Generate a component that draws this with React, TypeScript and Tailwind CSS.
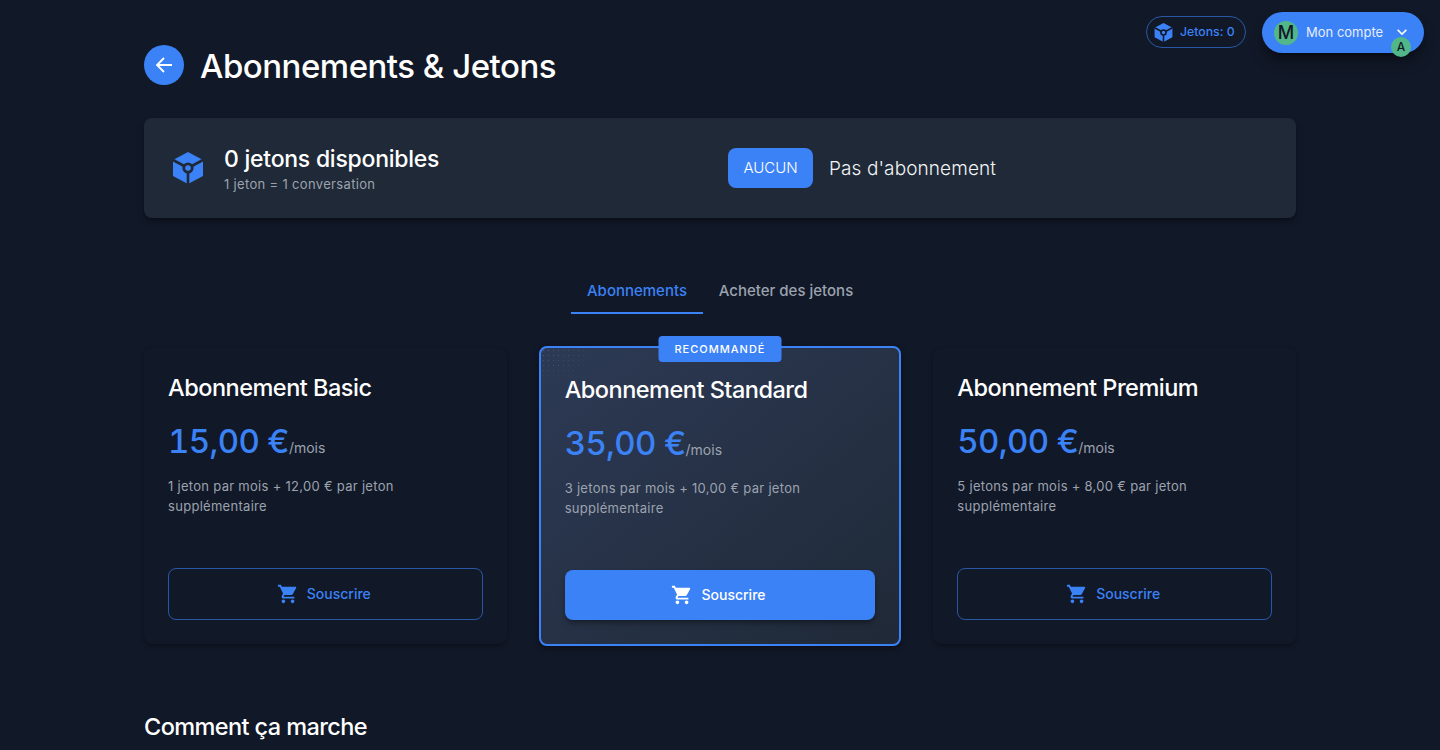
import { ReactNode } from 'react';

const FONT = { fontFamily: 'Inter' };

function TokenIcon({ className }: { className: string }) {
  return (
    <svg viewBox="0 0 32 32" className={className}>
      <mask id="token-cut">
        <path d="M16 0 31 8v16l-15 8-15-8V8L16 0Z" fill="white" />
        <path d="M16 16 1 8M16 16 31 8M16 16v16" stroke="black" strokeWidth="2.6" />
        <circle cx="16" cy="16" r="5.6" fill="black" />
        <circle cx="16" cy="16" r="2.8" fill="white" />
      </mask>
      <rect width="32" height="32" fill="currentColor" mask="url(#token-cut)" />
    </svg>
  );
}

function CartIcon({ className }: { className: string }) {
  return (
    <svg viewBox="0 0 24 24" className={className} fill="currentColor">
      <path d="M7 18c-1.1 0-1.99.9-1.99 2S5.9 22 7 22s2-.9 2-2-.9-2-2-2zM1 2v2h2l3.6 7.59-1.35 2.45c-.16.28-.25.61-.25.96 0 1.1.9 2 2 2h12v-2H7.42c-.14 0-.25-.11-.25-.25l.03-.12.9-1.63h7.45c.75 0 1.41-.41 1.75-1.03l3.58-6.49c.08-.14.12-.31.12-.48 0-.55-.45-1-1-1H5.21l-.94-2H1zm16 16c-1.1 0-1.99.9-1.99 2s.89 2 1.99 2 2-.9 2-2-.9-2-2-2z" />
    </svg>
  );
}

function PlanCard({ name, price, desc, children }: { name: string; price: string; desc: ReactNode; children: ReactNode }) {
  return (
    <>
      <h3 className="text-[23.5px] leading-[32px] font-medium text-white tracking-[-0.5px]">{name}</h3>
      <div className="mt-[17px] flex items-baseline text-[#3b82f6]">
        <span className="text-[33px] leading-[40px] font-medium tabular-nums tracking-[-0.65px]">{price}</span>
        <span className="text-sm text-[#9ca3af]">/mois</span>
      </div>
      <p className="mt-[15px] h-[92px] text-[13px] leading-[20px] tracking-[0.29px] text-[#9ca3af]">{desc}</p>
      {children}
    </>
  );
}

export default function App() {
  return (
    <div style={FONT} className="relative h-[750px] overflow-hidden bg-[#111827] text-white">
      {/* Top right account */}
      <div className="absolute top-3 right-4 flex items-start gap-4">
        <div className="mt-[4px] flex h-8 w-[100px] items-center gap-[7px] rounded-full border border-[#3b82f6]/60 pl-[7px] text-[12.25px] font-medium text-[#3b82f6]">
          <TokenIcon className="h-[19px] w-[19px]" />
          <span>Jetons: 0</span>
        </div>
        <div className="relative flex h-[41px] w-[162px] items-center rounded-full bg-[#3b82f6] pl-3 text-[13px] shadow-lg shadow-black/40">
          <span className="flex h-6 w-6 items-center justify-center rounded-full bg-[#52b788] text-lg font-medium text-[#111827]">M</span>
          <span className="ml-2 text-[#e5edff]">Mon compte</span>
          <svg viewBox="0 0 24 24" className="absolute right-[12px] top-[10px] h-5 w-5" fill="currentColor">
            <path d="M16.59 8.59 12 13.17 7.41 8.59 6 10l6 6 6-6z" />
          </svg>
          <span className="absolute right-[13px] top-[25px] flex h-5 w-5 items-center justify-center rounded-full bg-[#52b788] text-xs font-medium text-[#111827]">A</span>
        </div>
      </div>

      <div className="mx-auto w-[1152px] pt-[45px]">
        {/* Title */}
        <div className="flex items-center gap-4">
          <button className="flex h-10 w-10 items-center justify-center rounded-full bg-[#3b82f6] text-white">
            <svg viewBox="0 0 24 24" className="h-6 w-6" fill="none" stroke="currentColor" strokeWidth="1.8">
              <path d="M20 12H5.5M12 5l-7 7 7 7" />
            </svg>
          </button>
          <h1 className="pt-[2px] text-[33px] leading-[38px] font-medium tracking-[-0.5px]">Abonnements &amp; Jetons</h1>
        </div>

        {/* Balance */}
        <div className="mt-[33px] flex h-[100px] items-center rounded-lg bg-[#1f2937] px-6 shadow-md shadow-black/30">
          <div className="flex w-[560px] items-center gap-5 pl-[4px]">
            <TokenIcon className="h-8 w-8 text-[#3b82f6]" />
            <div className="pt-[2px]">
              <div className="text-[23px] leading-[28px] font-medium tracking-[-0.25px]">0 jetons disponibles</div>
              <div className="mt-[2px] text-[13px] leading-[18px] tracking-[0.33px] text-[#9ca3af]">1 jeton = 1 conversation</div>
            </div>
          </div>
          <span className="flex h-10 w-[85px] items-center justify-center rounded-lg bg-[#3b82f6] pt-[1px] text-[15px] font-light">AUCUN</span>
          <span className="ml-4 pt-[2px] text-[19px] font-light tracking-[0.1px] text-[#f3f4f6]">Pas d'abonnement</span>
        </div>

        {/* Tabs */}
        <div className="mt-[50px] flex justify-center">
          <div className="flex h-[46px] w-[132px] items-center justify-center border-b-2 border-[#3b82f6] pt-[2px] text-[15px] font-medium text-[#3b82f6]">Abonnements</div>
          <div className="flex h-[46px] w-[166px] items-center justify-center border-b-2 border-transparent pt-[2px] text-[15px] font-medium text-[#9ca3af]">Acheter des jetons</div>
        </div>

        {/* Plans */}
        <div className="mt-[32px] grid grid-cols-3 items-center gap-8">
          <div className="flex flex-col rounded-lg bg-[#111827] p-6 shadow-[0_2px_4px_rgba(0,0,0,0.3)]">
            <PlanCard name="Abonnement Basic" price="15,00 €" desc={<>1 jeton par mois + 12,00 € par jeton<br />supplémentaire</>}>
              <button className="flex h-[52px] items-center justify-center gap-2 rounded-lg border border-[#3b82f6]/60 text-sm font-medium text-[#3b82f6]">
                <CartIcon className="-ml-[3px] h-[22px] w-[22px]" />
                Souscrire
              </button>
            </PlanCard>
          </div>

          <div className="relative flex flex-col rounded-lg border-2 border-[#3b82f6] bg-gradient-to-br from-[#2d3a55] to-[#1f2937] px-6 pt-[26px] pb-6 shadow-[0_2px_6px_rgba(0,0,0,0.4)]">
            <div className="absolute left-0 top-0 h-[32px] w-[54px] bg-[radial-gradient(#cbd5e1_0.5px,transparent_0.7px)] bg-[length:5px_5px] opacity-25 [mask-image:radial-gradient(ellipse_at_top_left,black,transparent_80%)]" />
            <span className="absolute -top-[12px] left-1/2 flex h-[26px] w-[123px] -translate-x-1/2 items-center justify-center rounded bg-[#3b82f6] text-[11px] font-medium tracking-[1px]">RECOMMANDÉ</span>
            <PlanCard name="Abonnement Standard" price="35,00 €" desc={<>3 jetons par mois + 10,00 € par jeton<br />supplémentaire</>}>
              <button className="flex h-[50px] items-center justify-center gap-2 rounded-lg bg-[#3b82f6] text-sm font-medium shadow-md shadow-black/30">
                <CartIcon className="-ml-[3px] h-[22px] w-[22px]" />
                Souscrire
              </button>
            </PlanCard>
          </div>

          <div className="flex flex-col rounded-lg bg-[#111827] p-6 shadow-[0_2px_4px_rgba(0,0,0,0.3)]">
            <PlanCard name="Abonnement Premium" price="50,00 €" desc={<>5 jetons par mois + 8,00 € par jeton<br />supplémentaire</>}>
              <button className="flex h-[52px] items-center justify-center gap-2 rounded-lg border border-[#3b82f6]/60 text-sm font-medium text-[#3b82f6]">
                <CartIcon className="-ml-[3px] h-[22px] w-[22px]" />
                Souscrire
              </button>
            </PlanCard>
          </div>
        </div>

        <h2 className="mt-[65px] text-[23.5px] leading-[32px] font-medium tracking-[-0.6px]">Comment ça marche</h2>
      </div>
    </div>
  );
}
